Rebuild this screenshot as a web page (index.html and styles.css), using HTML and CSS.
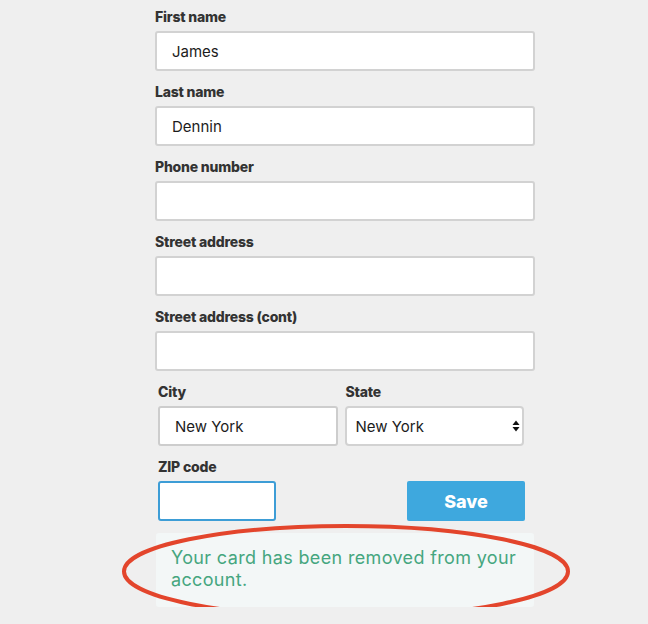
FILE: index.html
```html
<!DOCTYPE html>
<html lang="en">
<head>
<meta charset="utf-8">
<title>Account details</title>
<link rel="stylesheet" href="styles.css">
</head>
<body>
<form class="form">
  <div class="field">
    <label class="label" for="first">First name</label>
    <input class="input" id="first" type="text" value="James">
  </div>
  <div class="field">
    <label class="label" for="last">Last name</label>
    <input class="input" id="last" type="text" value="Dennin">
  </div>
  <div class="field">
    <label class="label" for="phone">Phone number</label>
    <input class="input" id="phone" type="text" value="">
  </div>
  <div class="field">
    <label class="label" for="street">Street address</label>
    <input class="input" id="street" type="text" value="">
  </div>
  <div class="field">
    <label class="label" for="street2">Street address (cont)</label>
    <input class="input" id="street2" type="text" value="">
  </div>
  <div class="row">
    <div class="field">
      <label class="label" for="city">City</label>
      <input class="input input-city" id="city" type="text" value="New York">
    </div>
    <div class="field">
      <label class="label label-state" for="state">State</label>
      <div class="select-wrap">
        <select class="select" id="state">
          <option>New York</option>
        </select>
        <svg class="select-arrows" width="8" height="12" viewBox="0 0 8 12" aria-hidden="true">
          <path d="M4 0.5 L7.5 5 L0.5 5 Z" fill="#111"/>
          <path d="M4 11.5 L7.5 7 L0.5 7 Z" fill="#111"/>
        </svg>
      </div>
    </div>
  </div>
  <div class="row row-zip">
    <div class="field">
      <label class="label" for="zip">ZIP code</label>
      <input class="input input-zip" id="zip" type="text" value="">
    </div>
    <button class="save" type="button">Save</button>
  </div>
  <div class="notice">
    <p class="notice-text">Your card has been removed from your account.</p>
    <svg class="notice-ring" width="452" height="99" viewBox="0 0 452 99" aria-hidden="true">
      <ellipse cx="226" cy="49.5" rx="222" ry="45.5" fill="none" stroke="#e3452c" stroke-width="4"/>
    </svg>
  </div>
</form>
</body>
</html>
```
FILE: styles.css
```css
* {
  box-sizing: border-box;
}

html, body {
  margin: 0;
  background: #efefef;
}

body {
  font-family: "Inter", "Noto Sans", "Liberation Sans", sans-serif;
  color: #333;
}

.form {
  width: 380px;
  margin-left: 155px;
  padding-top: 7px;
}

.field {
  margin-bottom: 11px;
}

.label {
  display: block;
  font-size: 14px;
  line-height: 20px;
  font-weight: 800;
  color: #333;
  margin-bottom: 4px;
  letter-spacing: -0.2px;
}

.input {
  display: block;
  width: 100%;
  height: 40px;
  margin: 0;
  padding: 0 15px;
  border: 2px solid #d2d2d2;
  border-radius: 3px;
  background: #fff;
  font-family: inherit;
  font-size: 15px;
  color: #1c1c1c;
  outline: none;
}

.row {
  display: grid;
  grid-template-columns: 1fr 1fr;
  column-gap: 7px;
  padding-left: 3px;
  padding-right: 11px;
}

.label-state {
  padding-left: 1px;
}

.input-city {
  border-color: #cdcdcd;
}

.select-wrap {
  position: relative;
}

.select {
  display: block;
  width: 100%;
  height: 40px;
  margin: 0;
  padding: 0 9px;
  border: 2px solid #d2d2d2;
  border-radius: 4px;
  background: #fff;
  font-family: inherit;
  font-size: 15px;
  color: #1c1c1c;
  -webkit-appearance: none;
  appearance: none;
  outline: none;
}

.select-arrows {
  position: absolute;
  right: 4px;
  top: 14px;
  pointer-events: none;
}

.row-zip {
  grid-template-columns: 118px 118px;
  justify-content: space-between;
  align-items: end;
  padding-right: 10px;
}

.input-zip {
  border-color: #3d9dd6;
}

.save {
  height: 40px;
  margin-bottom: 11px;
  border: none;
  border-radius: 2px;
  background: #3ea8de;
  color: #fff;
  font-family: inherit;
  font-size: 18px;
  font-weight: 800;
  cursor: pointer;
}

.notice {
  position: relative;
  margin: 1px 1px 0;
  padding: 14px 15px 16px;
  background: #f3f7f7;
  border-radius: 3px;
}

.notice-text {
  margin: 0;
  font-size: 18px;
  line-height: 22px;
  letter-spacing: 0.35px;
  color: #45a67f;
}

.notice-ring {
  position: absolute;
  left: -36px;
  top: -11px;
  pointer-events: none;
}
```
